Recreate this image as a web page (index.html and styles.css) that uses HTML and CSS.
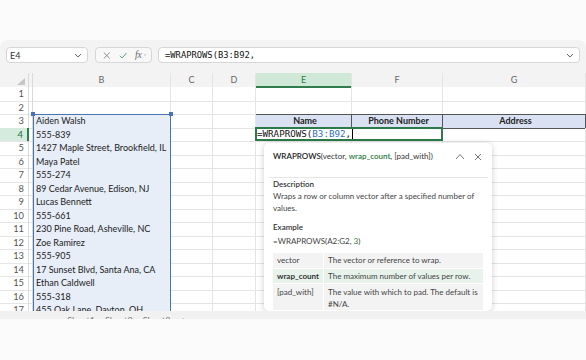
FILE: index.html
```html
<!DOCTYPE html>
<html>
<head>
  <meta charset="utf-8"/>
  <title>WRAPROWS</title>
  <link rel="stylesheet" href="styles.css">
</head>
<body>
  <div class="window">
    <div class="toolbar">
      <div class="namebox">
        <span>E4</span>
        <svg width="8" height="5" viewBox="0 0 8 5"><path d="M1 1l3 3 3-3" fill="none" stroke="#666" stroke-width="1"/></svg>
      </div>
      <div class="fxbox">
        <svg width="9" height="9" viewBox="0 0 9 9"><path d="M1 1l7 7M8 1L1 8" stroke="#7a7a7a" stroke-width="1"/></svg>
        <svg width="10" height="9" viewBox="0 0 10 9"><path d="M1 4.8l2.7 2.7L9 1.5" fill="none" stroke="#4f9d66" stroke-width="1.1"/></svg>
        <span class="fx">fx</span>
        <svg width="5" height="4" viewBox="0 0 5 4"><path d="M1 1l1.5 1.5L4 1" fill="none" stroke="#aaa" stroke-width="0.8"/></svg>
      </div>
      <div class="formula">
        <span>=WRAPROWS(B3:B92,</span>
        <svg width="8" height="5" viewBox="0 0 8 5"><path d="M1 1l3 3 3-3" fill="none" stroke="#666" stroke-width="1"/></svg>
      </div>
    </div>

    <div class="sheet">
      <div class="row head">
        <div class="corner"><svg width="8" height="7" viewBox="0 0 8 7"><path d="M8 0v7H0z" fill="#c6c6c6"/></svg></div>
        <div class="ch a"></div><div class="ch">B</div><div class="ch">C</div><div class="ch">D</div><div class="ch on">E</div><div class="ch">F</div><div class="ch">G</div>
      </div>
      <div class="row"><div class="rh">1</div><div class="c a"></div><div class="c"></div><div class="c"></div><div class="c"></div><div class="c"></div><div class="c"></div><div class="c"></div></div>
      <div class="row"><div class="rh">2</div><div class="c a"></div><div class="c"></div><div class="c"></div><div class="c"></div><div class="c"></div><div class="c"></div><div class="c"></div></div>
      <div class="row"><div class="rh">3</div><div class="c a"></div><div class="c s">Aiden Walsh</div><div class="c"></div><div class="c"></div><div class="c th">Name</div><div class="c th">Phone Number</div><div class="c th">Address</div></div>
      <div class="row"><div class="rh on">4</div><div class="c a"></div><div class="c s">555-839</div><div class="c"></div><div class="c"></div><div class="c"></div><div class="c"></div><div class="c"></div></div>
      <div class="row"><div class="rh">5</div><div class="c a"></div><div class="c s">1427 Maple Street, Brookfield, IL</div><div class="c"></div><div class="c"></div><div class="c"></div><div class="c"></div><div class="c"></div></div>
      <div class="row"><div class="rh">6</div><div class="c a"></div><div class="c s">Maya Patel</div><div class="c"></div><div class="c"></div><div class="c"></div><div class="c"></div><div class="c"></div></div>
      <div class="row"><div class="rh">7</div><div class="c a"></div><div class="c s">555-274</div><div class="c"></div><div class="c"></div><div class="c"></div><div class="c"></div><div class="c"></div></div>
      <div class="row"><div class="rh">8</div><div class="c a"></div><div class="c s">89 Cedar Avenue, Edison, NJ</div><div class="c"></div><div class="c"></div><div class="c"></div><div class="c"></div><div class="c"></div></div>
      <div class="row"><div class="rh">9</div><div class="c a"></div><div class="c s">Lucas Bennett</div><div class="c"></div><div class="c"></div><div class="c"></div><div class="c"></div><div class="c"></div></div>
      <div class="row"><div class="rh">10</div><div class="c a"></div><div class="c s">555-661</div><div class="c"></div><div class="c"></div><div class="c"></div><div class="c"></div><div class="c"></div></div>
      <div class="row"><div class="rh">11</div><div class="c a"></div><div class="c s">230 Pine Road, Asheville, NC</div><div class="c"></div><div class="c"></div><div class="c"></div><div class="c"></div><div class="c"></div></div>
      <div class="row"><div class="rh">12</div><div class="c a"></div><div class="c s">Zoe Ramirez</div><div class="c"></div><div class="c"></div><div class="c"></div><div class="c"></div><div class="c"></div></div>
      <div class="row"><div class="rh">13</div><div class="c a"></div><div class="c s">555-905</div><div class="c"></div><div class="c"></div><div class="c"></div><div class="c"></div><div class="c"></div></div>
      <div class="row"><div class="rh">14</div><div class="c a"></div><div class="c s">17 Sunset Blvd, Santa Ana, CA</div><div class="c"></div><div class="c"></div><div class="c"></div><div class="c"></div><div class="c"></div></div>
      <div class="row"><div class="rh">15</div><div class="c a"></div><div class="c s">Ethan Caldwell</div><div class="c"></div><div class="c"></div><div class="c"></div><div class="c"></div><div class="c"></div></div>
      <div class="row"><div class="rh">16</div><div class="c a"></div><div class="c s">555-318</div><div class="c"></div><div class="c"></div><div class="c"></div><div class="c"></div><div class="c"></div></div>
      <div class="row"><div class="rh">17</div><div class="c a"></div><div class="c s">455 Oak Lane, Dayton, OH</div><div class="c"></div><div class="c"></div><div class="c"></div><div class="c"></div><div class="c"></div></div>

      <!-- range highlight for B3:B92 -->
      <div class="range">
        <span class="handle tl"></span>
        <span class="handle tr"></span>
      </div>

      <!-- cell being edited -->
      <div class="editor">=WRAPROWS(<span class="ref">B3:B92</span>,<span class="caret"></span></div>

      <!-- function tooltip -->
      <div class="tip">
        <div class="tip-head">
          <div class="sig"><b>WRAPROWS</b>(vector, <b class="cur">wrap_count</b>, [pad_with])</div>
          <svg width="10" height="7" viewBox="0 0 10 7"><path d="M1 6l4-4.5L9 6" fill="none" stroke="#666" stroke-width="0.9"/></svg>
          <svg width="8" height="8" viewBox="0 0 8 8"><path d="M1 1l6 6M7 1L1 7" stroke="#666" stroke-width="0.9"/></svg>
        </div>
        <div class="tip-body">
          <div class="label">Description</div>
          <p>Wraps a row or column vector after a specified number of values.</p>
          <div class="label ex">Example</div>
          <p>=WRAPROWS(A2:G2, <span class="num">3</span>)</p>
          <table class="args">
            <tr><td>vector</td><td>The vector or reference to wrap.</td></tr>
            <tr class="cur"><td>wrap_count</td><td>The maximum number of values per row.</td></tr>
            <tr class="tall"><td>[pad_with]</td><td>The value with which to pad. The default is #N/A.</td></tr>
          </table>
        </div>
      </div>
    </div>

    <div class="tabs">
      <span>◂</span><span>▸</span><span>≡</span>
      <span class="tab">Sheet1</span><span class="tab">Sheet2</span><span class="tab">Sheet3</span><span>+</span>
    </div>
  </div>
</body>
</html>
```

FILE: styles.css
```css
* {
  box-sizing: border-box;
}
body {
  margin: 0;
  background-color: #fcfbfc;
  font-family: Lato, "Noto Sans", sans-serif;
  color: #222;
}
.window {
  margin-top: 40px;
  background-color: #f3f3f3;
  border-radius: 8px 8px 0 0;
}

/* formula bar */
.toolbar {
  display: flex;
  gap: 7px;
  height: 33px;
  padding: 7px 6px 0;
}
.namebox {
  display: flex;
  align-items: center;
  justify-content: space-between;
  width: 82px;
  height: 16px;
  padding: 0 5px 0 3px;
  background-color: #fff;
  border: 1px solid #d6d6d6;
  border-radius: 4px;
  font-size: 9px;
  color: #333;
}
.fxbox {
  display: flex;
  align-items: center;
  gap: 8px;
  width: 57px;
  height: 16px;
  padding: 0 4px 0 7px;
  background-color: #f8f8f8;
  border: 1px solid #d6d6d6;
  border-radius: 4px;
}
.fxbox .fx {
  font-family: "Liberation Serif", serif;
  font-style: italic;
  font-size: 9.5px;
  color: #666;
  margin-right: -7px;
}
.formula {
  display: flex;
  align-items: center;
  justify-content: space-between;
  width: 422px;
  margin-left: -1px;
  height: 16px;
  padding: 0 5px 0 6px;
  background-color: #fff;
  border: 1px solid #d6d6d6;
  border-radius: 4px;
  font-family: "DejaVu Sans Mono", monospace;
  font-size: 8.8px;
  color: #111;
}

/* grid */
.sheet {
  position: relative;
  height: 238px;
  overflow: hidden;
}
.row {
  display: grid;
  grid-template-columns: 29px 4px 138px 42px 43px 96px 91px 143px;
  height: 13.5px;
  background-color: #fff;
}
.row.head {
  height: 14px;
  background-color: #f3f3f3;
}
.corner {
  display: flex;
  align-items: flex-end;
  justify-content: flex-end;
  padding: 0 3px 3px 0;
  border-right: 1px solid #dadada;
}
.ch {
  text-align: center;
  font-size: 9px;
  line-height: 14px;
  color: #666;
  border-right: 1px solid #e4e4e4;
}
.ch.a {
  border-right: 1px solid #dadada;
}
.ch.on {
  background-color: #cfe8d8;
  border-bottom: 2px solid #2f7d4d;
  color: #2f7d4d;
  line-height: 13px;
}
.rh {
  text-align: right;
  padding-right: 4px;
  font-size: 9.3px;
  line-height: 13.5px;
  color: #555;
  border-right: 1px solid #dadada;
  border-bottom: 1px solid #e6e6e6;
}
.rh.on {
  background-color: #d4ebdd;
  color: #236b3e;
  border-right: 2px solid #2f7d4d;
}
.c {
  padding-left: 3px;
  font-size: 9px;
  line-height: 13px;
  white-space: nowrap;
  border-right: 1px solid #e4e4e4;
  border-bottom: 1px solid #e4e4e4;
}
.c.a {
  padding: 0;
  border-right: 1px solid #dadada;
}
.c.s {
  background-color: #e7eef8;
}
.c.th {
  text-align: center;
  font-weight: bold;
  background-color: #d9e1f2;
  border-top: 1px solid #555;
  border-right: 1px solid #555;
  border-bottom: 1px solid #555;
  line-height: 11.5px;
}
.c.th:first-of-type {
  border-left: 1px solid #555;
}

/* overlays */
.range {
  position: absolute;
  left: 33px;
  top: 41px;
  width: 138px;
  height: 210px;
  border: 1px solid #4874b3;
}
.handle {
  position: absolute;
  top: -3px;
  width: 4px;
  height: 4px;
  background-color: #4874b3;
}
.handle.tl { left: -3px; }
.handle.tr { right: -3px; }
.editor {
  position: absolute;
  left: 255px;
  top: 54px;
  width: 188px;
  height: 14px;
  padding-left: 0;
  background-color: #fff;
  border: 2px solid #2b7a49;
  font-family: "DejaVu Sans Mono", monospace;
  font-size: 9.2px;
  line-height: 10px;
  color: #111;
}
.editor .ref {
  color: #2f6fbf;
}
.caret {
  display: inline-block;
  width: 1px;
  height: 10px;
  margin-left: 1px;
  vertical-align: top;
  background-color: #000;
}

/* tooltip card */
.tip {
  position: absolute;
  left: 264px;
  top: 70px;
  width: 228px;
  height: 168px;
  background-color: #fff;
  border-radius: 5px;
  box-shadow: 0 1px 6px rgba(0,0,0,0.2);
  font-size: 8px;
  color: #444;
}
.tip-head {
  display: flex;
  align-items: flex-start;
  gap: 9px;
  height: 35px;
  margin: 0 4px 0 5px;
  padding: 8px 6px 0 4px;
  border-bottom: 1px solid #e6e6e6;
}
.tip-head svg {
  margin-top: 2px;
}
.sig {
  flex: 1;
  color: #333;
}
.sig b {
  font-weight: 600;
  color: #222;
}
.sig b.cur {
  color: #2a7a3e;
}
.tip-body {
  padding: 0 9px;
  line-height: 12px;
}
.tip-body p {
  margin: 0;
}
.label {
  font-weight: 600;
  color: #333;
}
.label.ex {
  margin-top: 7px;
  margin-bottom: 2px;
}
.num {
  color: #2a7a3e;
}
.args {
  width: 210px;
  margin-top: 6px;
  border-collapse: collapse;
}
.args td {
  height: 15px;
  padding: 0 4px;
  background-color: #f3f3f3;
  border-bottom: 1px solid #fff;
  vertical-align: middle;
}
.args td:first-child {
  width: 49px;
  border-right: 1px solid #fff;
}
.args tr.cur td {
  background-color: #e6f2ea;
}
.args tr.cur td:first-child {
  font-weight: bold;
  color: #333;
}
.args tr.tall td {
  height: 27px;
  vertical-align: top;
  padding-top: 2px;
}

/* sheet tabs (cut off) */
.tabs {
  display: flex;
  gap: 14px;
  height: 8px;
  padding: 5px 0 0 10px;
  overflow: hidden;
  font-size: 9px;
  line-height: 9px;
  color: #777;
  background-color: #f1f1f1;
}
.tabs .tab {
  margin-right: -4px;
}
```
